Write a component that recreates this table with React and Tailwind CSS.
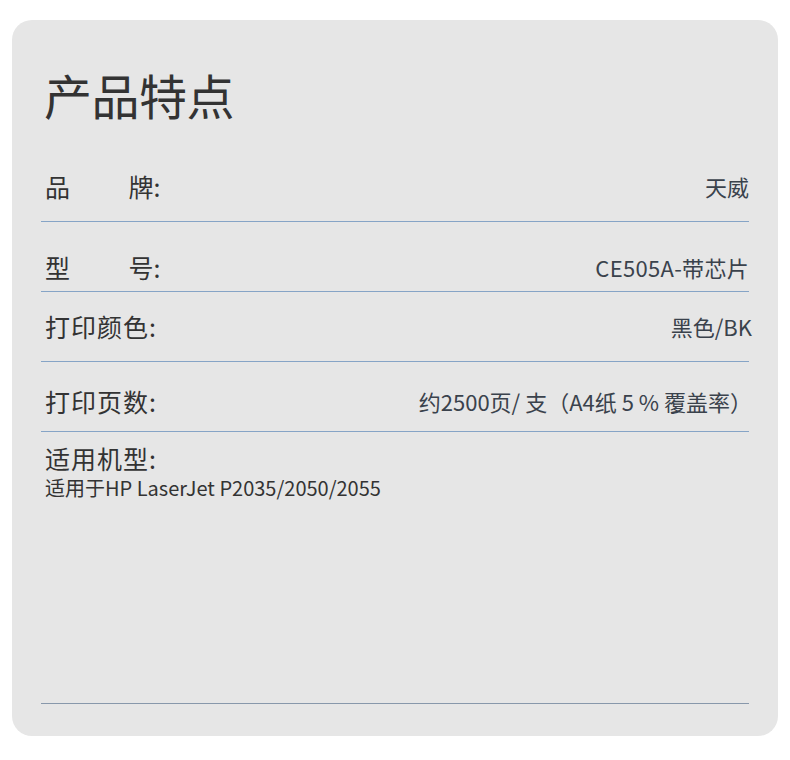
export default function App() {
  const font = { fontFamily: '"Noto Sans CJK SC", "Noto Sans", sans-serif' };
  return (
    <div className="w-[790px] h-[760px] bg-white pt-[20px] px-[12px]" style={font}>
      <div className="w-[766px] h-[716px] bg-[#e6e6e6] rounded-[20px] px-[29px] flex flex-col">
        <div className="h-[132px] flex items-center pt-[16px]">
          <h1 className="text-[48px] leading-none text-[#333] pl-[3px] tracking-[-0.5px]">产品特点</h1>
        </div>

        <div className="h-[70px] flex items-center justify-between border-b border-[#86a4c6] pl-[4px]">
          <span className="text-[25px] text-[#333]">品　　 <span className="ml-[3px]">牌:</span></span>
          <span className="text-[22px] text-[#3a424c]">天威</span>
        </div>

        <div className="h-[70px] flex items-center justify-between border-b border-[#86a4c6] pl-[4px] pt-[22px]">
          <span className="text-[25px] text-[#333]">型　　 <span className="ml-[3px]">号:</span></span>
          <span className="text-[22px] text-[#3a424c] tracking-[0.3px]">CE505A-带芯片</span>
        </div>

        <div className="h-[70px] flex items-center justify-between border-b border-[#86a4c6] pl-[4px]">
          <span className="text-[25px] text-[#333] tracking-[1px]">打印颜色:</span>
          <span className="text-[22px] text-[#3a424c] mr-[-3px]">黑色/BK</span>
        </div>

        <div className="h-[70px] flex items-center justify-between border-b border-[#86a4c6] pl-[4px] pt-[10px]">
          <span className="text-[25px] text-[#333] tracking-[1px]">打印页数:</span>
          <span className="text-[22px] text-[#3a424c] mr-[-3px]">约2500页/ 支（A4纸 5 % 覆盖率）</span>
        </div>

        <div className="flex-1 border-b border-[#8898ab] pl-[4px] pt-[8px]">
          <div className="text-[25px] leading-[36px] text-[#333] tracking-[1px]">适用机型:</div>
          <div className="text-[20px] leading-[24px] text-[#333]">适用于HP LaserJet P2035/2050/2055</div>
        </div>

        <div className="h-[32px]" />
      </div>
    </div>
  );
}
